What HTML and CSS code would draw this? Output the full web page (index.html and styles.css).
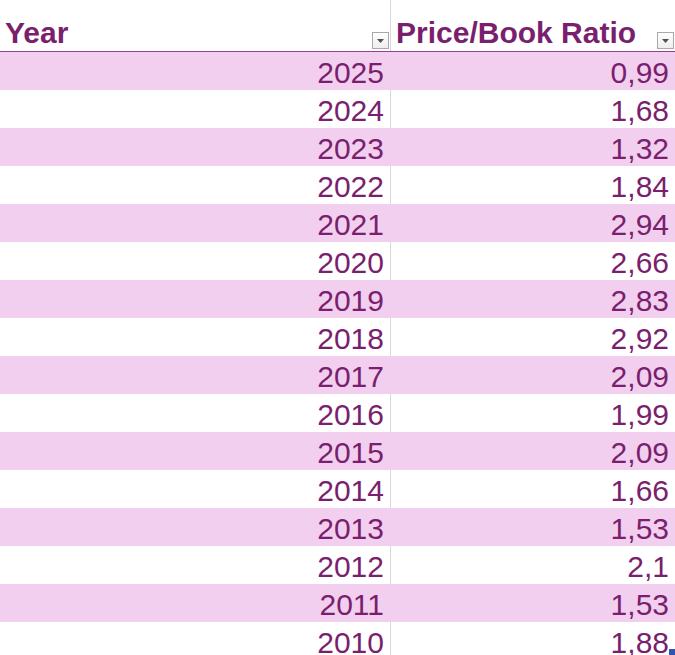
FILE: index.html
```html
<!DOCTYPE html>
<html>
<head>
<meta charset="utf-8">
<link rel="stylesheet" href="styles.css">
</head>
<body>
<div class="sheet">
  <div class="row head">
    <div class="cell c1"><span class="htext">Year</span><span class="dd"><svg width="7" height="4" viewBox="0 0 7 4"><path d="M0 0H7L3.5 4Z" fill="#505050"/></svg></span></div>
    <div class="cell c2"><span class="htext">Price/Book Ratio</span><span class="dd"><svg width="7" height="4" viewBox="0 0 7 4"><path d="M0 0H7L3.5 4Z" fill="#505050"/></svg></span></div>
  </div>
  <div class="row band"><div class="cell c1">2025</div><div class="cell c2">0,99</div></div>
  <div class="row"><div class="cell c1">2024</div><div class="cell c2">1,68</div></div>
  <div class="row band"><div class="cell c1">2023</div><div class="cell c2">1,32</div></div>
  <div class="row"><div class="cell c1">2022</div><div class="cell c2">1,84</div></div>
  <div class="row band"><div class="cell c1">2021</div><div class="cell c2">2,94</div></div>
  <div class="row"><div class="cell c1">2020</div><div class="cell c2">2,66</div></div>
  <div class="row band"><div class="cell c1">2019</div><div class="cell c2">2,83</div></div>
  <div class="row"><div class="cell c1">2018</div><div class="cell c2">2,92</div></div>
  <div class="row band"><div class="cell c1">2017</div><div class="cell c2">2,09</div></div>
  <div class="row"><div class="cell c1">2016</div><div class="cell c2">1,99</div></div>
  <div class="row band"><div class="cell c1">2015</div><div class="cell c2">2,09</div></div>
  <div class="row"><div class="cell c1">2014</div><div class="cell c2">1,66</div></div>
  <div class="row band"><div class="cell c1">2013</div><div class="cell c2">1,53</div></div>
  <div class="row"><div class="cell c1">2012</div><div class="cell c2">2,1</div></div>
  <div class="row band"><div class="cell c1">2011</div><div class="cell c2">1,53</div></div>
  <div class="row"><div class="cell c1">2010</div><div class="cell c2 last">1,88<span class="handle"></span></div></div>
</div>
</body>
</html>
```
FILE: styles.css
```css
html, body {
  margin: 0;
  padding: 0;
  background: #ffffff;
  overflow: hidden;
}
.sheet {
  width: 675px;
  font-family: "Liberation Sans", Arial, sans-serif;
  color: #7a1f6e;
}
.row {
  display: grid;
  grid-template-columns: 391px 284px;
  height: 38px;
}
.row .cell {
  box-sizing: border-box;
  font-size: 30px;
  line-height: 41px;
  height: 38px;
  text-align: right;
  white-space: nowrap;
}
.row .c1 {
  border-right: 1px solid #d9d9d9;
  padding-right: 6px;
}
.row .c2 {
  padding-right: 6px;
}
.row.band {
  background: #f2cfee;
}
.row.band .c1 {
  border-right-color: #f2cfee;
}
.row.head {
  height: 52px;
  border-bottom: 1px solid #9c3f8f;
  box-sizing: border-box;
}
.row.head .cell {
  height: 51px;
  display: flex;
  align-items: flex-end;
  justify-content: space-between;
  padding: 0 1px 1px 5px;
  text-align: left;
}
.htext {
  font-weight: bold;
  font-size: 30px;
  line-height: 34px;
}
.dd {
  width: 17px;
  height: 17px;
  box-sizing: border-box;
  border: 1px solid #a9a9a9;
  background: linear-gradient(#ffffff, #eeeeee);
  display: flex;
  align-items: center;
  justify-content: center;
  margin-bottom: 1px;
}
.last {
  position: relative;
}
.handle {
  position: absolute;
  right: 0;
  top: 27px;
  width: 6px;
  height: 6px;
  background: #2f55b0;
}
```
